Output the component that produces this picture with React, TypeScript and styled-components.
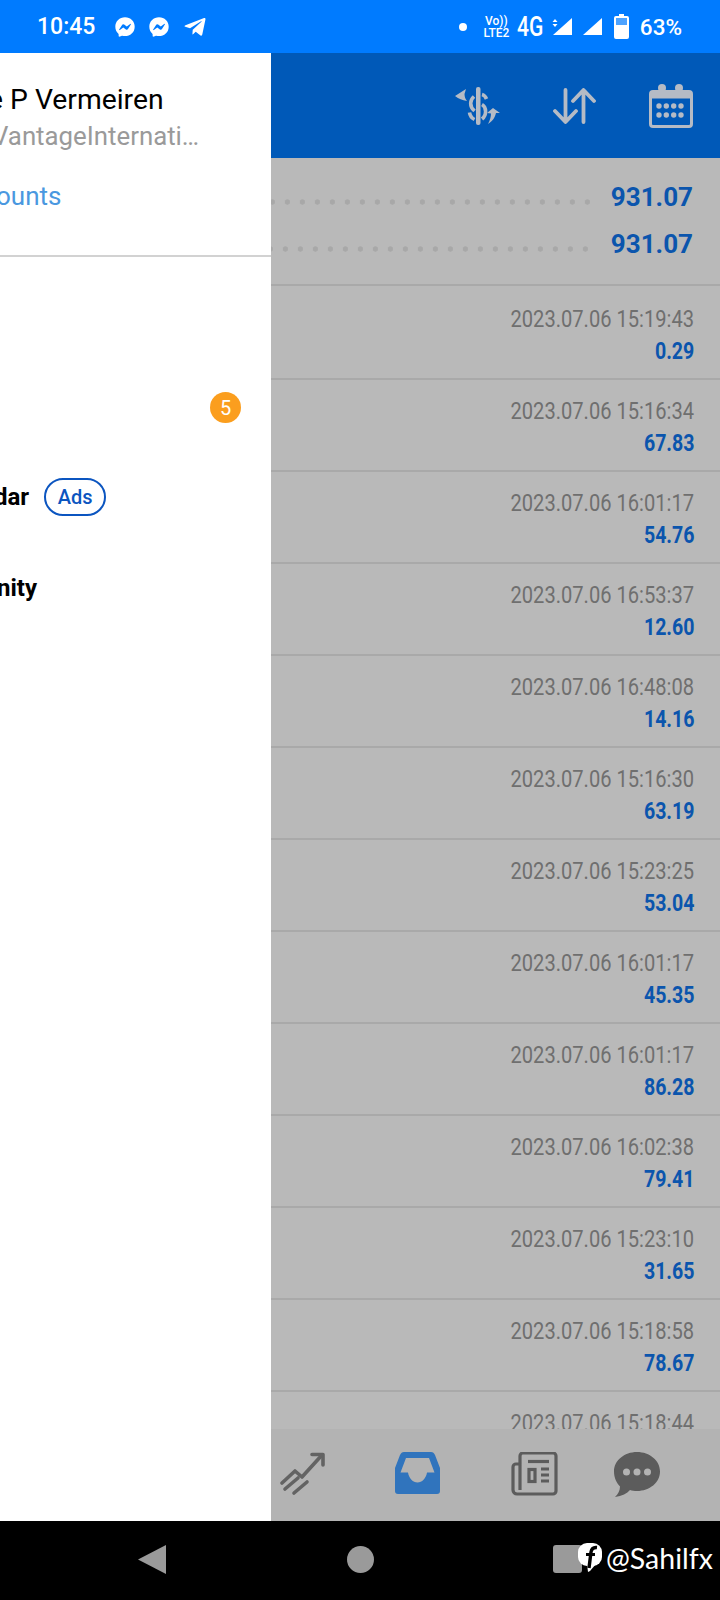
import styled, { createGlobalStyle } from "styled-components";
import { FaFacebookMessenger, FaTelegramPlane } from "react-icons/fa";

const GlobalStyle = createGlobalStyle`
  html, body {
    margin: 0;
    padding: 0;
    background: #000;
  }
  * {
    box-sizing: border-box;
  }
`;

const Screen = styled.div`
  width: 720px;
  height: 1600px;
  display: flex;
  flex-direction: column;
  overflow: hidden;
  font-family: Roboto, "Liberation Sans", sans-serif;
`;

const StatusBar = styled.div`
  height: 53px;
  flex: none;
  background: #007bff;
  color: #fff;
  display: flex;
  align-items: center;
  padding: 0 38px 0 37px;
`;

const Clock = styled.span`
  font-size: 23px;
  font-weight: 500;
  width: 78px;
`;

const StatusIcons = styled.div`
  display: flex;
  align-items: center;
  gap: 14px;
  font-size: 20px;
`;

const StatusRight = styled.div`
  margin-left: auto;
  display: flex;
  align-items: center;
`;

const Dot = styled.span`
  width: 8px;
  height: 8px;
  border-radius: 50%;
  background: #fff;
  margin-right: 16px;
`;

const Volte = styled.div`
  display: flex;
  flex-direction: column;
  align-items: center;
  font-size: 12px;
  line-height: 12px;
  font-weight: 500;
  width: 27px;
  margin-right: 7px;
`;

const FourG = styled.span`
  display: inline-block;
  font-size: 27px;
  font-weight: 500;
  width: 28px;
  margin-right: 7px;
  transform: scaleX(0.78);
  transform-origin: left center;
`;

const Percent = styled.span`
  font-size: 22.5px;
  font-weight: 500;
  margin-left: 11px;
`;

const Middle = styled.div`
  flex: 1;
  display: flex;
  min-height: 0;
`;

const Drawer = styled.div`
  width: 271px;
  flex: none;
  background: #fff;
  overflow: hidden;
`;

const Account = styled.div`
  height: 204px;
  padding-top: 30px;
  border-bottom: 2px solid #d2d2d2;
`;

const AccountName = styled.div`
  font-size: 28.3px;
  line-height: 34px;
  color: #000;
  white-space: nowrap;
  margin-left: -12px;
`;

const AccountServer = styled.div`
  font-size: 25.8px;
  line-height: 32px;
  margin-top: 3px;
  color: #9a9a9a;
  white-space: nowrap;
  margin-left: -8px;
`;

const AccountsLink = styled.div`
  font-size: 26px;
  line-height: 34px;
  margin-top: 27px;
  color: #4a98e0;
  white-space: nowrap;
  margin-left: -4px;
`;

const Menu = styled.div`
  padding-top: 12px;
`;

const MenuItem = styled.div`
  height: 91px;
  display: flex;
  align-items: center;
  gap: 15px;
`;

const MenuLabel = styled.span<{ $shift: number }>`
  font-size: 24px;
  font-weight: 700;
  color: #000;
  margin-left: ${(p) => p.$shift}px;
`;

const Badge = styled.span`
  width: 31px;
  height: 31px;
  border-radius: 50%;
  background: #fb9e1e;
  color: #fff;
  font-size: 20px;
  display: flex;
  align-items: center;
  justify-content: center;
  margin: 4px 0 0 210px;
`;

const AdsPill = styled.span`
  width: 62px;
  height: 38px;
  border: 2px solid #0b55c0;
  border-radius: 19px;
  color: #0b55c0;
  font-size: 20px;
  font-weight: 500;
  display: flex;
  align-items: center;
  justify-content: center;
`;

const Main = styled.div`
  flex: 1;
  min-width: 0;
  display: flex;
  flex-direction: column;
  background: #b9b9b9;
`;

const Header = styled.div`
  height: 105px;
  flex: none;
  background: #0059b8;
  display: flex;
  align-items: center;
  justify-content: flex-end;
  padding: 0 27px 0 0;
  gap: 53px;
  color: #b5bbc5;
`;

const Summary = styled.div`
  height: 128px;
  flex: none;
  padding-top: 15px;
  border-bottom: 2px solid #a9a9a9;
`;

const SummaryRow = styled.div<{ $gap: number }>`
  height: 47px;
  display: flex;
  align-items: center;
  padding-right: 27px;
  gap: ${(p) => p.$gap}px;
`;

const Leader = styled.div`
  flex: 1;
  height: 6px;
  margin-top: 10px;
  background-image: radial-gradient(circle, #a8a8a8 2.4px, transparent 2.9px);
  background-size: 15px 6px;
  background-position: right center;
`;

const SummaryValue = styled.span`
  font-size: 26px;
  font-weight: 700;
  color: #0b55ad;
`;

const List = styled.div`
  flex: 1;
  min-height: 0;
  overflow: hidden;
`;

const Row = styled.div<{ $first?: boolean }>`
  height: ${(p) => (p.$first ? 94 : 92)}px;
  border-bottom: 2px solid #a9a9a9;
  display: flex;
  flex-direction: column;
  align-items: flex-end;
  padding: ${(p) => (p.$first ? 19 : 17)}px 26px 0 0;
`;

const Time = styled.span`
  display: inline-block;
  font-size: 24px;
  line-height: 28px;
  color: #6f6f6f;
  white-space: nowrap;
  transform: scaleX(0.838);
  transform-origin: right center;
`;

const Amount = styled.span`
  display: inline-block;
  font-size: 23px;
  line-height: 28px;
  margin-top: 5px;
  font-weight: 700;
  color: #0b55ad;
  transform: scaleX(0.85);
  transform-origin: right center;
`;

const TabBar = styled.div`
  height: 92px;
  flex: none;
  background: #b3b3b3;
  display: flex;
  align-items: flex-start;
  padding: 23px 0 0 9px;
`;

const Tab = styled.div<{ $gap: number }>`
  display: flex;
  margin-right: ${(p) => p.$gap}px;
`;

const NavBar = styled.div`
  height: 79px;
  flex: none;
  background: #000;
  position: relative;
  display: flex;
  align-items: center;
  padding: 0 0 3px 138px;
`;

const NavBack = styled.svg`
  width: 28px;
  height: 29px;
  margin-right: 181px;
`;

const NavHome = styled.span`
  width: 27px;
  height: 27px;
  border-radius: 50%;
  background: #9a9a9a;
  margin-right: 179px;
`;

const NavRecent = styled.span`
  width: 29px;
  height: 28px;
  border-radius: 3px;
  background: #9a9a9a;
`;

const Watermark = styled.div`
  position: absolute;
  left: 578px;
  top: 22px;
  display: flex;
  align-items: flex-start;
  gap: 4px;
  color: #fff;
  font-family: Lato, Roboto, sans-serif;
  font-size: 28.5px;
  line-height: 30px;
`;

const rows = [
  ["2023.07.06 15:19:43", "0.29"],
  ["2023.07.06 15:16:34", "67.83"],
  ["2023.07.06 16:01:17", "54.76"],
  ["2023.07.06 16:53:37", "12.60"],
  ["2023.07.06 16:48:08", "14.16"],
  ["2023.07.06 15:16:30", "63.19"],
  ["2023.07.06 15:23:25", "53.04"],
  ["2023.07.06 16:01:17", "45.35"],
  ["2023.07.06 16:01:17", "86.28"],
  ["2023.07.06 16:02:38", "79.41"],
  ["2023.07.06 15:23:10", "31.65"],
  ["2023.07.06 15:18:58", "78.67"],
  ["2023.07.06 15:18:44", ""],
];

const SignalMark = styled.svg<{ $gap: number }>`
  margin-right: ${(p) => p.$gap}px;
`;

const Signal = ({ arrows }: { arrows?: boolean }) => (
  <SignalMark width="21" height="20" viewBox="0 0 21 20" $gap={arrows ? 9 : 11}>
    <path d="M20 1V18H1Z" fill="#fff" />
    {arrows && <path d="M3 2l2.500 3h-5zM3 10l2.500-3h-5z" fill="#fff" />}
  </SignalMark>
);

const Battery = () => (
  <svg width="15" height="25" viewBox="0 0 15 25">
    <path
      d="M5 0h5v2h3a2 2 0 0 1 2 2v19a2 2 0 0 1-2 2H2a2 2 0 0 1-2-2V4a2 2 0 0 1 2-2h3z"
      fill="#fff"
    />
    <rect x="2" y="4" width="11" height="7" fill="#4da3ff" />
  </svg>
);

const DollarIcon = () => (
  <svg width="45" height="38" viewBox="0 0 45 38" fill="none">
    <rect x="21" y="0" width="4.500" height="38" rx="2" fill="currentColor" />
    <path d="M27 7.500 C29 8 30.500 9.500 31.500 12" stroke="currentColor" strokeWidth="3.600" />
    <path d="M19 9.500 C15 13 14 19 19.500 24" stroke="currentColor" strokeWidth="3.600" />
    <path d="M14.500 25.500 C15 29 16.500 31 19.500 32.500" stroke="currentColor" strokeWidth="3.600" />
    <path d="M27 17.500 C31.500 20 32 28 27 32" stroke="currentColor" strokeWidth="3.600" />
    <path d="M0 9 11 2 9.500 7C9.500 10 10.500 12 12 14 7 13 4 12 0 9Z" fill="currentColor" />
    <path d="M45 26 38 21 32 26 36 26.500C36 30 35 33 33 37 38 34 40 30 41 26Z" fill="currentColor" />
  </svg>
);

const SortIcon = () => (
  <svg width="43" height="36" viewBox="0 0 43 36" fill="none" stroke="currentColor" strokeWidth="3.800" strokeLinecap="round" strokeLinejoin="round">
    <path d="M12.500 2v31M2 23l10.500 11L23 23" />
    <path d="M30.500 34V3M20 13 30.500 2 41 13" />
  </svg>
);

const CalendarIcon = () => (
  <svg width="44" height="44" viewBox="0 0 44 44" fill="none">
    <circle cx="13" cy="4" r="4" fill="currentColor" />
    <circle cx="30" cy="4" r="4" fill="currentColor" />
    <rect x="1.500" y="7.500" width="41" height="35" rx="2.500" stroke="currentColor" strokeWidth="3" />
    <rect x="1.500" y="7.500" width="41" height="7" fill="currentColor" />
    {[10, 17.3, 24.7, 32].map((x) => (
      <g key={x} fill="currentColor">
        <circle cx={x} cy="22" r="2.700" />
        <circle cx={x} cy="31" r="2.700" />
      </g>
    ))}
  </svg>
);

const ChartIcon = () => (
  <svg width="46" height="44" viewBox="0 0 46 44" fill="none" stroke="#636363" strokeWidth="3.600" strokeLinecap="round" strokeLinejoin="round">
    <path d="M2 31 15 19l7 6L42 3" />
    <path d="M32 2.500h11V13" />
    <path d="M5 37 18 26" />
    <path d="M14 41 27 30" />
  </svg>
);

const InboxIcon = () => (
  <svg width="46" height="43" viewBox="0 0 46 43">
    <path
      fillRule="evenodd"
      fill="#3074bd"
      d="M9 0H36c2 0 3 1 4 3L45 16V39c0 2-1 3-3 3H3c-2 0-3-1-3-3V16L5 3C6 1 7 0 9 0ZM11 6 5.500 20.500H13c1 6 5 10 9.500 10s8.500-4 9.500-10H39.500L34 6Z"
    />
  </svg>
);

const NewsIcon = () => (
  <svg width="47" height="45" viewBox="0 0 47 45" fill="none" stroke="#5c5c5c" strokeWidth="3.200">
    <path d="M8.500 12H5a3 3 0 0 0-3 3V38a4 4 0 0 0 4 4H42a3 3 0 0 0 3-3V4a3 3 0 0 0-3-3H12a3 3 0 0 0-3 3V38" strokeLinejoin="round" />
    <path d="M17 9.500h21" />
    <rect x="18" y="17.500" width="6" height="12" />
    <path d="M30 17h8M30 23h8M30 29h8" />
  </svg>
);

const ChatIcon = () => (
  <svg width="46" height="45" viewBox="0 0 46 45">
    <path
      fill="#5c5c5c"
      d="M23 0c12.700 0 23 8.500 23 19.500S35.700 39 23 39c-2.500 0-5-.3-7-1-3 3.500-8 6-15 7 3-3 5-6.500 5-10.500C2.500 31 0 25.500 0 19.500 0 8.500 10.300 0 23 0Z"
    />
    <g fill="#b3b3b3">
      <circle cx="12.500" cy="20" r="3.500" />
      <circle cx="23" cy="20" r="3.500" />
      <circle cx="33.500" cy="20" r="3.500" />
    </g>
  </svg>
);

const FacebookMark = () => (
  <svg width="24" height="30" viewBox="0 0 24 30" fill="none">
    <rect x="0" y="0" width="24" height="23" rx="9" fill="#fff" />
    <path d="M9 21h9l-6 7-2 1Z" fill="#fff" />
    <path d="M19 4.500C15 4 13.500 6 13 9L11 25" stroke="#000" strokeWidth="3.400" />
    <path d="M8 11.500H17" stroke="#000" strokeWidth="3" />
  </svg>
);

export default function App() {
  return (
    <Screen>
      <GlobalStyle />
      <StatusBar>
        <Clock>10:45</Clock>
        <StatusIcons>
          <FaFacebookMessenger />
          <FaFacebookMessenger />
          <FaTelegramPlane size={24} />
        </StatusIcons>
        <StatusRight>
          <Dot />
          <Volte>
            <span>Vo))</span>
            <span>LTE2</span>
          </Volte>
          <FourG>4G</FourG>
          <Signal arrows />
          <Signal />
          <Battery />
          <Percent>63%</Percent>
        </StatusRight>
      </StatusBar>
      <Middle>
        <Drawer>
          <Account>
            <AccountName>e P Vermeiren</AccountName>
            <AccountServer>VantageInternati…</AccountServer>
            <AccountsLink>ounts</AccountsLink>
          </Account>
          <Menu>
            <MenuItem />
            <MenuItem>
              <Badge>5</Badge>
            </MenuItem>
            <MenuItem>
              <MenuLabel $shift={-6}>dar</MenuLabel>
              <AdsPill>Ads</AdsPill>
            </MenuItem>
            <MenuItem>
              <MenuLabel $shift={-3}>nity</MenuLabel>
            </MenuItem>
          </Menu>
        </Drawer>
        <Main>
          <Header>
            <DollarIcon />
            <SortIcon />
            <CalendarIcon />
          </Header>
          <Summary>
            <SummaryRow $gap={16}>
              <Leader />
              <SummaryValue>931.07</SummaryValue>
            </SummaryRow>
            <SummaryRow $gap={18}>
              <Leader />
              <SummaryValue>931.07</SummaryValue>
            </SummaryRow>
          </Summary>
          <List>
            {rows.map(([time, amount], i) => (
              <Row key={i} $first={i === 0}>
                <Time>{time}</Time>
                {amount && <Amount>{amount}</Amount>}
              </Row>
            ))}
          </List>
          <TabBar>
            <Tab $gap={69}>
              <ChartIcon />
            </Tab>
            <Tab $gap={70}>
              <InboxIcon />
            </Tab>
            <Tab $gap={56}>
              <NewsIcon />
            </Tab>
            <Tab $gap={0}>
              <ChatIcon />
            </Tab>
          </TabBar>
        </Main>
      </Middle>
      <NavBar>
        <NavBack viewBox="0 0 28 29">
          <path d="M28 0V29L0 14.500Z" fill="#9a9a9a" />
        </NavBack>
        <NavHome />
        <NavRecent />
        <Watermark>
          <FacebookMark />
          <span>@Sahilfx</span>
        </Watermark>
      </NavBar>
    </Screen>
  );
}
